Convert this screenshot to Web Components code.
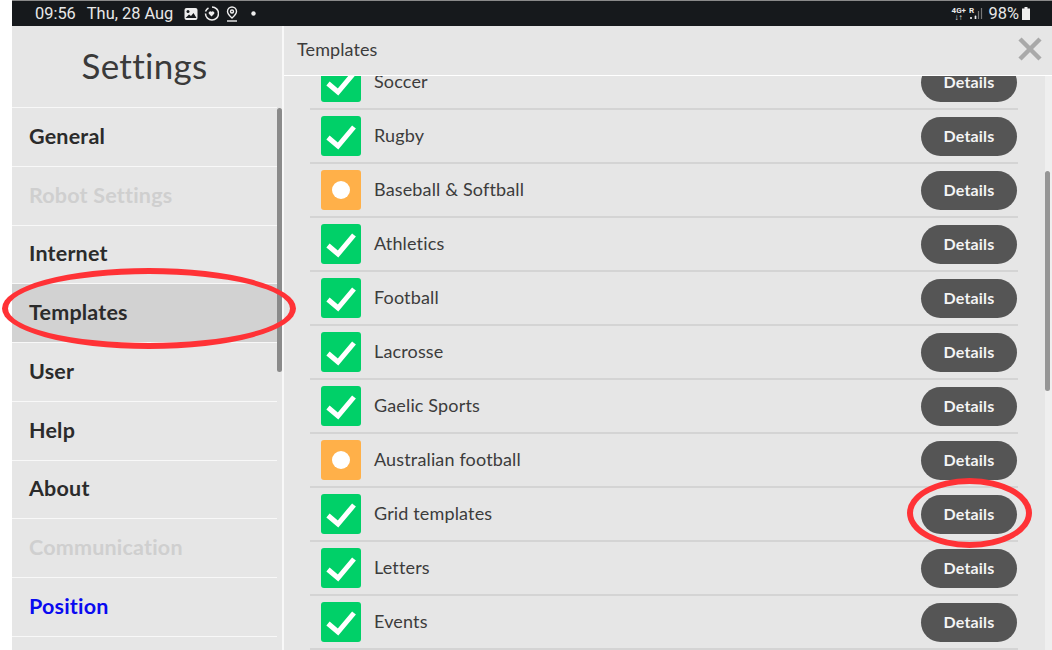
<!DOCTYPE html>
<html>
<head>
<meta charset="utf-8">
<style>
html,body{margin:0;padding:0;background:#fff;height:650px;overflow:hidden;}
body{font-family:"Lato","Liberation Sans",sans-serif;}
settings-app{width:1052px;height:650px;}
</style>
</head>
<body>
<settings-app></settings-app>
<script>
/* status bar on top of the tablet screen */
class StatusBar extends HTMLElement {
  constructor() {
    super();
    this.attachShadow({ mode: 'open' });
    this.shadowRoot.innerHTML = `
<style>
:host{display:flex;align-items:center;height:26px;box-sizing:border-box;background:#16191c;color:#e8e8e8;border-top:1px solid #8a8a8a;font:16.4px Roboto,sans-serif;padding:0 21px 0 23px;}
.date{margin-left:11px;}
.icons{display:flex;align-items:center;gap:6px;margin-left:11px;}
.right{margin-left:auto;display:flex;align-items:center;}
.net{font:bold 8px/7px Roboto,sans-serif;text-align:center;width:14px;}
svg{display:block;}
</style>
<span>09:56</span><span class="date">Thu, 28 Aug</span>
<div class="icons">
  <svg width="14" height="14" viewBox="0 0 14 14"><rect x="0.500" y="1" width="13" height="12" rx="2" fill="#eee"/><circle cx="4" cy="4.500" r="1.500" fill="#16191c"/><path d="M1.500 11l3.500-3.500 2 1.500 2.500-3 3 5z" fill="#16191c"/></svg>
  <svg width="15" height="15" viewBox="0 0 15 15" fill="none" stroke="#eee" stroke-width="1.500"><path d="M8 1a6.500 6.500 0 1 1-6.500 6.500"/><path d="M1.500 5.500a6.500 6.500 0 0 1 3-3.500"/><path d="M7.500 10.500L4.800 7.800a1.700 1.700 0 0 1 2.700-2 1.700 1.700 0 0 1 2.700 2z" fill="#eee" stroke="none"/></svg>
  <svg width="14" height="16" viewBox="0 0 14 16" fill="none" stroke="#eee" stroke-width="1.400"><path d="M7 12C4.200 9.500 2.500 7.500 2.500 5.500a4.500 4.500 0 0 1 9 0c0 2-1.700 4-4.500 6.500z"/><circle cx="7" cy="5.500" r="1.500"/><path d="M2 15h10"/></svg>
  <svg width="5" height="5" viewBox="0 0 5 5" style="margin-left:6px"><circle cx="2.500" cy="2.500" r="2.200" fill="#eee"/></svg>
</div>
<div class="right">
  <span class="net">4G+<br>↓↑</span>
  <svg width="15" height="15" viewBox="0 0 15 15" style="margin-left:3px"><path d="M6.500 13V9M9.500 13V5M12.500 13V2" stroke="#777" stroke-width="1.200"/><path d="M2 13v-2M6.500 13v-3" stroke="#eee" stroke-width="1.600"/><text x="0" y="7" font-size="8" font-family="Roboto" font-weight="700" fill="#eee">R</text></svg>
  <span style="margin-left:5px">98%</span>
  <svg width="10" height="15" viewBox="0 0 10 15" style="margin-left:2px"><path d="M3.500 1h3v1.500H9V14H1V2.500h2.500z" fill="#eee"/></svg>
</div>`;
  }
}
customElements.define('status-bar', StatusBar);

class SideItem extends HTMLElement {
  constructor() {
    super();
    this.attachShadow({ mode: 'open' });
    this.shadowRoot.innerHTML = `
<style>
:host{display:flex;align-items:center;box-sizing:border-box;height:58.75px;flex:none;padding:0 0 2px 17px;border-bottom:1.500px solid #f8f8f8;font-size:21.500px;font-weight:700;letter-spacing:.2px;color:#2b2b2b;}
:host([dim]){color:#cfcfcf;}
:host([active]){background:#d2d2d2;}
:host([link]){color:#0a0af0;}
</style>
<slot></slot>`;
  }
}
customElements.define('side-item', SideItem);

class SettingsSidebar extends HTMLElement {
  constructor() {
    super();
    this.attachShadow({ mode: 'open' });
    this.shadowRoot.innerHTML = `
<style>
:host{display:flex;width:270px;flex:none;background:#e6e6e6;position:relative;overflow:hidden;}
.col{width:265px;flex:none;display:flex;flex-direction:column;}
h1{margin:0;box-sizing:border-box;height:82px;flex:none;padding-bottom:3px;border-bottom:1.500px solid #f8f8f8;display:flex;align-items:center;justify-content:center;font-size:35px;font-weight:400;color:#3a3a3a;letter-spacing:.3px;}
.thumb{position:absolute;left:265px;top:82px;width:5px;height:264px;border-radius:3px;background:#8a8a8a;}
</style>
<div class="col">
  <h1>Settings</h1>
  <slot></slot>
</div>
<div class="thumb"></div>`;
  }
}
customElements.define('settings-sidebar', SettingsSidebar);

class StatusTile extends HTMLElement {
  constructor() {
    super();
    this.attachShadow({ mode: 'open' });
    const partial = this.hasAttribute('partial');
    this.shadowRoot.innerHTML = `
<style>
:host{display:block;width:40px;height:40px;flex:none;border-radius:3px;background:${partial ? '#ffb049' : '#00d068'};}
svg{display:block;}
</style>
<svg width="40" height="40" viewBox="0 0 40 40">${partial
  ? '<circle cx="20" cy="20" r="9" fill="#fff"/>'
  : '<path d="M7 21.500L17 30 33 11" fill="none" stroke="#fff" stroke-width="5"/>'}</svg>`;
  }
}
customElements.define('status-tile', StatusTile);

class TemplateRow extends HTMLElement {
  constructor() {
    super();
    this.attachShadow({ mode: 'open' });
    const partial = this.hasAttribute('partial') ? ' partial' : '';
    this.shadowRoot.innerHTML = `
<style>
:host{display:flex;align-items:center;height:52px;flex:none;border-bottom:2px solid #d4d4d4;padding:0 1px 0 11px;font-size:18px;letter-spacing:.15px;color:#3c3c3c;}
span{margin-left:13px;flex:1;padding-bottom:2px;}
button{all:unset;box-sizing:border-box;width:96px;height:39px;margin-top:1px;padding-bottom:2px;border-radius:20px;background:#555;color:#f4f4f4;font:700 16px Lato,sans-serif;letter-spacing:.2px;text-align:center;}
</style>
<status-tile${partial}></status-tile>
<span><slot></slot></span>
<button>Details</button>`;
  }
}
customElements.define('template-row', TemplateRow);

class TemplatesPanel extends HTMLElement {
  constructor() {
    super();
    this.attachShadow({ mode: 'open' });
    this.shadowRoot.innerHTML = `
<style>
:host{display:flex;flex-direction:column;flex:1;min-width:0;background:#e6e6e6;border-left:2px solid #f8f8f8;position:relative;}
header{height:48.500px;flex:none;display:flex;align-items:center;justify-content:space-between;padding:0 9px 0 13px;border-bottom:1.500px solid #fff;font-size:18px;letter-spacing:.1px;color:#3c3c3c;}
.title{padding-bottom:2px;}
header svg{margin-bottom:2px;}
.body{flex:1;overflow:hidden;display:flex;}
.list{width:708px;margin:-20px 0 0 26px;display:flex;flex-direction:column;flex:none;}
.track{position:absolute;right:0;top:50px;bottom:0;width:7px;background:#efefef;}
.thumb{position:absolute;right:2px;top:145px;width:5px;height:220px;border-radius:3px;background:#959595;}
svg{display:block;}
</style>
<header><span class="title">Templates</span>
  <svg width="26" height="26" viewBox="0 0 26 26"><path d="M3 3l20 20M23 3L3 23" stroke="#a9a9a9" stroke-width="4.500"/></svg>
</header>
<div class="body"><div class="list"><slot></slot></div></div>
<div class="track"></div>
<div class="thumb"></div>`;
  }
}
customElements.define('templates-panel', TemplatesPanel);

/* red hand drawn annotation */
class RedRing extends HTMLElement {
  constructor() {
    super();
    this.attachShadow({ mode: 'open' });
    this.shadowRoot.innerHTML = `
<style>
:host{position:absolute;display:block;border:6px solid #ff3236;border-radius:50%;box-sizing:border-box;pointer-events:none;}
</style>`;
  }
}
customElements.define('red-ring', RedRing);

class SettingsApp extends HTMLElement {
  constructor() {
    super();
    this.attachShadow({ mode: 'open' });
    const rows = [
      ['Soccer'], ['Rugby'], ['Baseball &amp; Softball', 1], ['Athletics'], ['Football'], ['Lacrosse'],
      ['Gaelic Sports'], ['Australian football', 1], ['Grid templates'], ['Letters'], ['Events']
    ].map(r => `<template-row${r[1] ? ' partial' : ''}>${r[0]}</template-row>`).join('');
    this.shadowRoot.innerHTML = `
<style>
:host{display:flex;flex-direction:column;position:relative;box-sizing:border-box;padding-left:12px;overflow:hidden;}
.main{display:flex;flex:1;min-height:0;}
</style>
<status-bar></status-bar>
<div class="main">
  <settings-sidebar>
    <side-item>General</side-item>
    <side-item dim>Robot Settings</side-item>
    <side-item>Internet</side-item>
    <side-item active>Templates</side-item>
    <side-item>User</side-item>
    <side-item>Help</side-item>
    <side-item>About</side-item>
    <side-item dim>Communication</side-item>
    <side-item link>Position</side-item>
  </settings-sidebar>
  <templates-panel>${rows}</templates-panel>
</div>
<red-ring style="left:2px;top:268px;width:294px;height:81px"></red-ring>
<red-ring style="left:907px;top:478px;width:125px;height:70px"></red-ring>`;
  }
}
customElements.define('settings-app', SettingsApp);
</script>
</body>
</html>
